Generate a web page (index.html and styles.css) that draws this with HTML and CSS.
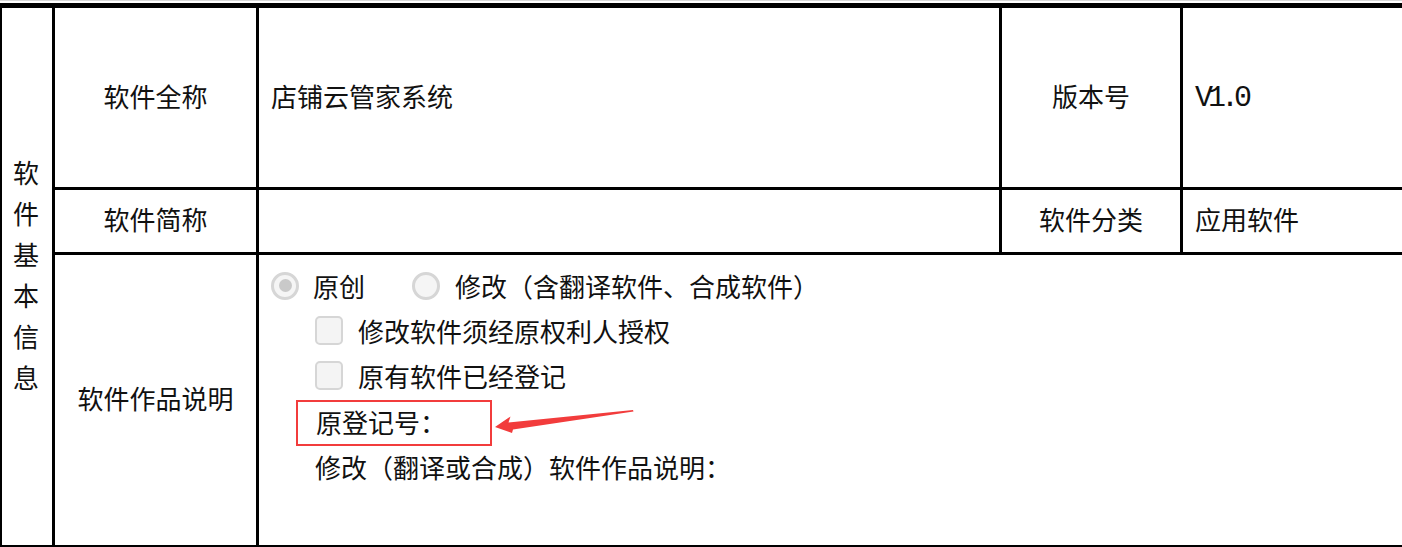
FILE: index.html
```html
<!DOCTYPE html>
<html lang="zh-CN">
<head>
<meta charset="utf-8">
<title>软件基本信息</title>
<link rel="stylesheet" href="styles.css">
</head>
<body>
<div class="page">
  <div class="sheet">
    <div class="cell side"><span class="vtext">软件基本信息</span></div>
    <div class="cell label">软件全称</div>
    <div class="cell value">店铺云管家系统</div>
    <div class="cell label">版本号</div>
    <div class="cell value mono">V1.0</div>
    <div class="cell label">软件简称</div>
    <div class="cell value"></div>
    <div class="cell label">软件分类</div>
    <div class="cell value">应用软件</div>
    <div class="cell label">软件作品说明</div>
    <div class="cell desc">
      <div class="line radios">
        <span class="radio checked"></span><span class="opt">原创</span>
        <span class="radio second"></span><span class="opt">修改（含翻译软件、合成软件）</span>
      </div>
      <div class="line indent"><span class="check"></span><span class="opt">修改软件须经原权利人授权</span></div>
      <div class="line indent"><span class="check"></span><span class="opt">原有软件已经登记</span></div>
      <div class="line boxed">原登记号：
        <svg class="arrow" width="146" height="46" viewBox="0 0 146 46" aria-hidden="true">
          <polygon points="3,27 18.5,16.5 16.5,22.5 141,10 141.5,11.5 21,29.5 20,33" fill="#f23c3c"/>
        </svg>
      </div>
      <div class="line indent">修改（翻译或合成）软件作品说明：</div>
    </div>
  </div>
</div>
</body>
</html>
```

FILE: styles.css
```css
html, body {
  margin: 0;
  padding: 0;
  background: #fff;
  overflow: hidden;
}

.page {
  width: 1402px;
  height: 547px;
  border-top: 1px solid #d8d8d8;
  padding-top: 2px;
  box-sizing: border-box;
}

.sheet {
  width: 1402px;
  box-sizing: border-box;
  display: grid;
  grid-template-columns: 50px 201px 740px 178px 1fr;
  grid-template-rows: 179px 62px 290px;
  gap: 3px;
  background: #000;
  border-top: 5px solid #000;
  padding-left: 2px;
  padding-bottom: 2px;
  font-family: "Noto Sans CJK SC", "Noto Sans", sans-serif;
  font-size: 26px;
  color: #111;
  text-spacing-trim: space-all;
}

.cell {
  background: #fff;
  display: flex;
  align-items: center;
  min-width: 0;
  box-sizing: border-box;
  padding-bottom: 5px;
}

.side {
  grid-row: 1 / 4;
  justify-content: center;
}

.vtext {
  width: 26px;
  line-height: 41px;
  text-align: center;
  word-break: break-all;
  padding-right: 2px;
}

.label {
  justify-content: center;
}

.value {
  padding-left: 12px;
}

.mono {
  font-family: "Liberation Mono", monospace;
  font-size: 30px;
  letter-spacing: -5px;
  padding-bottom: 0;
}

.desc {
  grid-column: 3 / 6;
  flex-direction: column;
  align-items: flex-start;
  padding: 10px 0 0 12px;
}

.line {
  height: 45px;
  box-sizing: border-box;
  padding-bottom: 4px;
  display: flex;
  align-items: center;
  white-space: nowrap;
}

.radio {
  width: 28px;
  height: 28px;
  border-radius: 50%;
  box-sizing: border-box;
  border: 3px solid #d6d6d6;
  background: #f5f5f5;
  display: flex;
  align-items: center;
  justify-content: center;
  margin-right: 14px;
}

.radio.checked::after {
  content: "";
  width: 13px;
  height: 13px;
  border-radius: 50%;
  background: #c9c9c9;
}

.radio.second {
  margin-left: 47px;
  margin-right: 15px;
}

.indent {
  padding-left: 44px;
}

.check {
  width: 28px;
  height: 29px;
  box-sizing: border-box;
  border: 2px solid #d6d6d6;
  border-radius: 5px;
  background: #f4f4f4;
  margin-right: 15px;
}

.boxed {
  position: relative;
  margin-left: 25px;
  width: 196px;
  height: 46px;
  border: 2px solid #f23c3c;
  padding-left: 18px;
}

.arrow {
  position: absolute;
  left: 100%;
  top: -2px;
  margin-left: 2px;
}
```
